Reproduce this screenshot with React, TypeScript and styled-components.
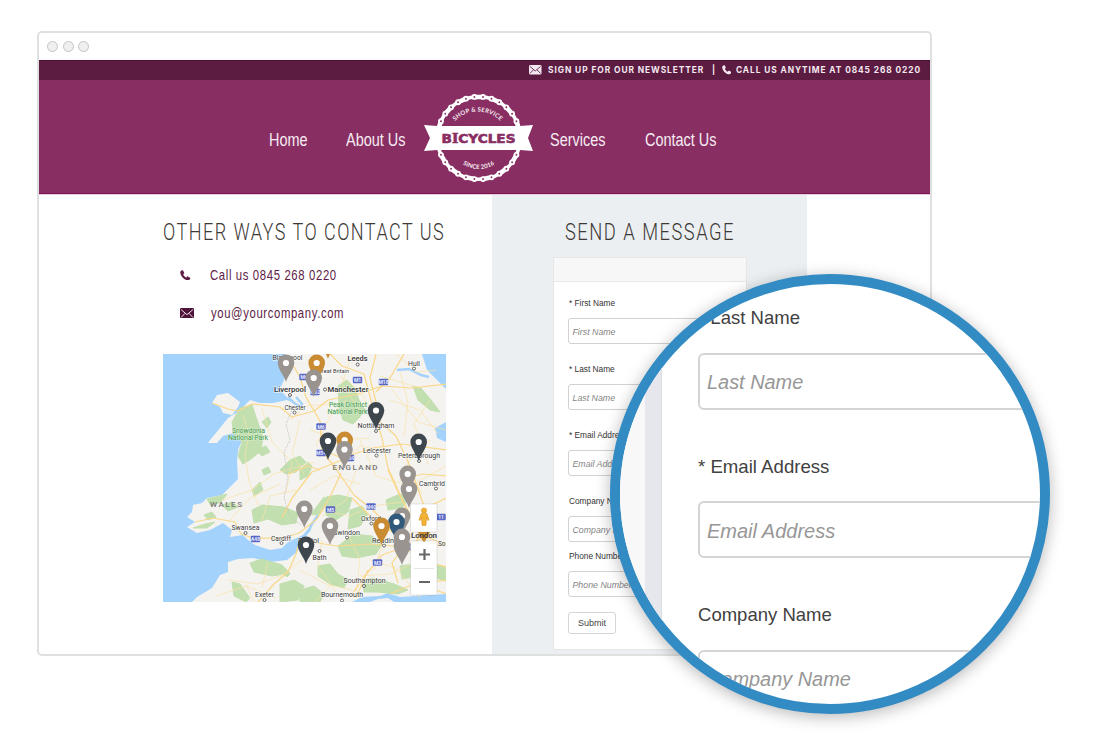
import React from "react";
import styled, { createGlobalStyle } from "styled-components";

const GlobalStyle = createGlobalStyle`
  * { box-sizing: border-box; }
  body { margin: 0; background: #fff; font-family: "Liberation Sans", Arial, sans-serif; }
`;

const Stage = styled.main`
  width: 1099px;
  height: 756px;
  padding: 31px 0 0 37px;
  position: relative;
  overflow: hidden;
  background: #fff;
`;

const Browser = styled.section`
  width: 895px;
  height: 625px;
  border: 2px solid #dfe0e0;
  border-radius: 5px;
  overflow: hidden;
  background: #fff;
  display: flex;
  flex-direction: column;
`;

const TitleBar = styled.div`
  flex: 0 0 27px;
  display: flex;
  align-items: center;
  gap: 4.6px;
  padding: 0 0 1px 8px;
`;

const Dot = styled.i`
  width: 11px;
  height: 11px;
  border-radius: 50%;
  border: 1px solid #c4c4c4;
  background: #efefef;
`;

const TopBar = styled.div`
  flex: 0 0 20px;
  display: flex;
  align-items: center;
  background: #5c1c42;
  border-top: 1px solid #4c1236;
  padding: 0 0 1px 490px;
  color: #f4e9f0;
`;

/* Text drawn narrower or wider than its font, in a box of a known width. */
const Fitted = styled.span<{ $w: number; $scale: number }>`
  flex: none;
  display: block;
  width: ${(p) => p.$w}px;
  white-space: nowrap;
  transform: scaleX(${(p) => p.$scale});
  transform-origin: left center;
`;

const TopText = styled(Fitted)`
  font: 700 9px/18px Inter, "Open Sans", sans-serif;
  letter-spacing: 1px;
`;

const Hero = styled.header`
  flex: 0 0 115px;
  display: flex;
  align-items: center;
  background: #892e63;
  border-bottom: 1px solid #eccbdc;
  box-shadow: inset 0 -1px 0 #7c1450;
  padding: 2px 0 0 230px;
`;

const NavItem = styled(Fitted)`
  font-size: 18px;
  line-height: 24px;
  color: #f6ecf2;
  padding-top: 4px;
`;

const Content = styled.div`
  flex: 1;
  display: flex;
  min-height: 0;
`;

const ContactColumn = styled.section`
  width: 453px;
  padding: 22px 0 0 124px;
  display: flex;
  flex-direction: column;
`;

const Heading = styled(Fitted).attrs({ as: "h2" })`
  margin: 0;
  font-family: Roboto, sans-serif;
  font-weight: 300;
  font-size: 24.5px;
  line-height: 30px;
  letter-spacing: 2px;
  color: #3d3935;
`;

const ContactRow = styled.div<{ $top: number }>`
  display: flex;
  align-items: center;
  height: 20px;
  margin-top: ${(p) => p.$top}px;
  padding-left: 17px;
  color: #5d1d46;
  font-size: 14.5px;
`;

const IconCell = styled.span<{ $w: number }>`
  flex: none;
  width: ${(p) => p.$w}px;
  display: flex;
  align-items: center;
`;

const ContactText = styled(Fitted)`
  letter-spacing: 0.8px;
`;

const MapFrame = styled.div`
  margin-top: 31px;
  height: 248px;
  width: 283px;
  svg { display: block; }
`;

const MessageColumn = styled.section`
  width: 315px;
  background: #ebeff2;
  padding: 22px 0 0 61px;
`;

const MessageTitle = styled.div`
  padding-left: 12px;
`;

const Card = styled.div`
  width: 194px;
  height: 393px;
  margin-top: 10px;
  background: #fff;
  border: 1px solid #e4e6e8;
  border-radius: 2px;
`;

const CardHead = styled.div`
  height: 24px;
  background: #f7f7f7;
  border-bottom: 1px solid #e8e8e8;
`;

const CardBody = styled.div`
  padding: 15px 14px 0;
`;

const Field = styled.label<{ $gap: number }>`
  display: block;
  margin-bottom: ${(p) => p.$gap}px;
`;

const LabelText = styled.span`
  display: block;
  padding-left: 1px;
  font-size: 8.3px;
  line-height: 12px;
  color: #333;
  white-space: pre;
`;

const InputBox = styled.span`
  display: flex;
  align-items: center;
  height: 26px;
  margin-top: 9px;
  padding: 1px 0 0 3.5px;
  border: 1px solid #d2d2d2;
  border-radius: 3px;
  font-size: 8.8px;
  font-style: italic;
  color: #858585;
  background: #fff;
`;

const SubmitButton = styled.button`
  display: block;
  width: 48px;
  height: 22px;
  padding: 0;
  border: 1px solid #d6d6d6;
  border-radius: 3px;
  background: #fff;
  font: 9px "Liberation Sans", Arial, sans-serif;
  color: #444;
`;

const Lens = styled.div`
  position: absolute;
  left: 610px;
  top: 274px;
  width: 440px;
  height: 440px;
  border: 10px solid #338bc4;
  border-radius: 50%;
  overflow: hidden;
  background: #fff;
  box-shadow: 0 3px 16px rgba(0, 0, 0, 0.28);
  display: flex;
`;

const LensPage = styled.div`
  flex: 0 0 25px;
  background: #f8f8f8;
`;

const LensGutter = styled.div`
  flex: 0 0 17px;
  background: #e5e7ec;
  border-right: 1px solid #dddee1;
`;

const LensForm = styled.div`
  flex: none;
  width: 378px;
  padding: 22px 0 0 36px;
`;

const LensField = styled.div`
  height: 148.5px;
`;

const LensLabel = styled(Fitted)`
  height: 24px;
  font-size: 19px;
  line-height: 24px;
  color: #414141;
`;

const LensInput = styled.div`
  margin-top: 22.5px;
  height: 57px;
  width: 460px;
  display: flex;
  align-items: center;
  padding: 3px 0 0 7px;
  border: 2px solid #d4d4d4;
  border-radius: 6px;
  font-size: 20px;
  font-style: italic;
  color: #979797;
`;

const Envelope = ({ width, color, line }: { width: number; color: string; line: string }) => (
  <svg width={width} height={(width * 10) / 13} viewBox="0 0 13 10">
    <rect width="13" height="10" rx="1.2" fill={color} />
    <path d="M1 1.5 6.5 6.2 12 1.5M1 8.8 4.6 5M12 8.8 8.4 5" fill="none" stroke={line} strokeWidth="0.9" />
  </svg>
);

const Phone = ({ size, color }: { size: number; color: string }) => (
  <svg width={size} height={size} viewBox="0 0 11 11">
    <path
      d="M2.3.2C.9.6 0 1.700.3 3.200c.6 3.600 3.800 7 7.300 7.500 1.500.2 2.700-.5 3.200-1.900.1-.3 0-.6-.3-.8L8.300 6.700c-.3-.2-.6-.1-.8.1l-.9 1C5.200 7.200 3.900 5.900 3.300 4.400l.9-.8c.3-.2.3-.5.2-.8L3.200.5C3 .2 2.700.1 2.300.2Z"
      fill={color}
    />
  </svg>
);

const rollers = Array.from({ length: 30 }, (_, i) => {
  const a = ((6 + i * 12) * Math.PI) / 180;
  return { x: 54.7 + 41.3 * Math.sin(a), y: 45 - 41.3 * Math.cos(a) };
});

const LogoSvg = styled.svg`
  flex: none;
  display: block;
  overflow: visible;
  margin-right: 17px;
`;

const Logo = () => (
  <LogoSvg width="109" height="90" viewBox="0 0 109 90">
    <circle cx="54.7" cy="45" r="41.3" fill="none" stroke="#fff" strokeWidth="3.600" />
    {rollers.map((r, i) => {
      const n = rollers[(i + 1) % 30];
      return i % 2 === 1 ? (
        <line key={i} x1={r.x} y1={r.y} x2={n.x} y2={n.y} stroke="#fff" strokeWidth="4.600" />
      ) : null;
    })}
    {rollers.map((r, i) => (
      <circle key={i} cx={r.x} cy={r.y} r="2.900" fill="#fff" />
    ))}
    {rollers.map((r, i) => (
      <circle key={i} cx={r.x} cy={r.y} r="0.950" fill="#892e63" />
    ))}
    <path d="M0 32 13 33H96l13-1-5 13 5 13-13-1H13L0 58l6-13Z" fill="#fff" />
    <path id="arcTop" d="M21.700 50.500a32 32 0 0 1 64 0" fill="none" />
    <path id="arcLow" d="M25.700 47a29 29 0 0 0 58 0" fill="none" />
    <g fontFamily="Lato, sans-serif" fontWeight="700" fontSize="6" fill="#f8eef4" textAnchor="middle">
      <text letterSpacing="0.200">
        <textPath href="#arcTop" startOffset="50%">SHOP &amp; SERVICE</textPath>
      </text>
      <text letterSpacing="0.100">
        <textPath href="#arcLow" startOffset="50%">SINCE 2016</textPath>
      </text>
    </g>
    <text x="17.500" y="49.700" textLength="74" lengthAdjust="spacingAndGlyphs" fontWeight="700" fontSize="12.500" fill="#892e63" stroke="#892e63" strokeWidth="0.600" fontFamily="DejaVu Sans, sans-serif">
      B<tspan fontFamily="DejaVu Serif, serif">I</tspan>CYCLES
    </text>
  </LogoSvg>
);

const GREY = "#999490";
const DARK = "#3e464e";
const ORANGE = "#c98c33";
const pins: [number, number, string][] = [
  [328, 359, ORANGE], [286, 382, GREY], [316.700, 382, ORANGE], [313.700, 397, GREY],
  [376, 429.500, DARK], [344.700, 459, ORANGE], [328, 460, DARK], [344.500, 468.500, GREY],
  [418.700, 461, DARK], [407.700, 493, GREY], [409, 508, GREY], [304.300, 528, GREY],
  [330, 545, GREY], [306, 564, DARK], [402, 535, GREY], [396.500, 541, "#30597c"],
  [381.500, 545, ORANGE], [402, 565, GREY], [402, 556, GREY],
];

const Pin = ({ x, y, color }: { x: number; y: number; color: string }) => (
  <g transform={`translate(${x} ${y})`}>
    <path d="M0 0C-1.500-6-8.300-13-8.300-19.200a8.300 8.300 0 0 1 16.600 0C8.300-13 1.500-6 0 0Z" fill={color} />
    <circle cy="-19" r="3.100" fill="#fff" />
  </g>
);

const greens = [
  "M240 408l12-3 4 12 7 20-2 14-10 8-8 5-5-8 4-14-8-8-2-12z",
  "M262 422l6-5 3 5-4 6zM256 450l10-4 4 6-8 4z",
  "M338 386l9-6 8 8 4 12 6 10-6 8-6 6-10-4-4-14z",
  "M413 386l8 2 10 12 9 12-10-2-12-10z",
  "M280 470l10-10 10-4 6 6-10 10-10 2zM252 490l8-8 3 8-9 6z",
  "M252 510l10-5 22 2 14 6-2 10-14 2-14-6-14 4zM222 505l10-3 6 5-10 4z",
  "M207 499l12-3 8-2-6 8-10 4zM193 528l12-4 10-2-8 6z",
  "M300 470l8-8 4 4-4 10-8 4zM310 515l8-10 6-8 4 5-8 12z",
  "M326 497l12-2 14 3-4 14-12 8-10-5z",
  "M350 510l12-4 6 8-8 12-12 3z",
  "M338 546l16-12 18 2 10 8-6 10-20 4-14-2z",
  "M250 563l12-4 20 6 8 8-18 3-18-4zM276 567l5-1 9 8-3 3z",
  "M318 566l12-2 8 10 10 6-4 8-14-4-12-8z",
  "M362 580l12-2 20 6 14 6-10 4-20-2-14 0z",
  "M400 566l20-3 26 4v14l-20-6-24 4z",
  "M280 584l14-4 10 6-6 14-18 2zM232 582l8 2 10 14-4 4-12-6z",
  "M300 590l14-4 10 8-4 8h-20z",
  "M386 500l14-6 10 4-8 10-14 2z",
  "M204 515l8-3 4 5-8 3zM262 470l6-3 3 5-7 3z",
];

const majorRoads = [
  "M212 403l16 6 10 2 14-7 28 3 12 10 22-6 14-11 30-6 24-8 30 2 34-4",
  "M288 357l12 20 6 20 14 24 2 30 14 18 18 26 20 16 24 26",
  "M330 354l12 12 22 8 8 30 10 34 6 30 18 40",
  "M376 354l-6 24 6 24M404 354l-14 24-14 14M378 420l18 16 14 30 14 40",
  "M322 450l20 8 30-10 30-4 44 6M342 460l-30 12-20 26-10 20",
  "M195 522l18-4 22 4 6 12 12 4 30 0 16-5 18-14 14-24 10-22",
  "M300 540l36 6 34-2 34 3 20-10M300 540l-4 14-8 18-14 12-16 18",
  "M368 570l-12 28M404 547l-22 8-18 22-14 20M404 547l20 14 22 6M424 506l-8 40 10 40 20 8",
  "M352 498l20 20 26 18M400 480l22-6 24 2M388 470l12 26 22 40 24 8M390 594l24-10 32-4",
  "M446 498l-24 12-10 24M320 470l-12-4-20 8M446 545l-22 0-22 4-10 14 6 20",
];

const minorRoads = [
  "M243 415l6 20-4 20 4 26 10 26M262 408l10 34 20 20-6 30M300 420l-8 34 12 20",
  "M222 500l30-10 22-16 40-12M230 520l20-22 30-14M262 520l8-24 26-6",
  "M340 376l20 16 14 22M390 400l30 10 18 24M400 372l8 30-4 34M346 400l-16 16-14 30",
  "M360 440l16 36 34 10 36-20M356 470l-10 30-24 16M430 400l-16 24 14 40",
  "M320 510l30 6 22-10 30-4M322 540l-4 26 18 26M346 530l14 30-4 34M390 520l-16 50",
  "M228 580l30 4 22-8 22-16M216 596l30-10 30 12M300 570l26 14 26 6M420 560l-30 14-30 2",
  "M336 470l24-24 28 6M310 490l24-14 26 8M430 440l-24 24 16 30M290 420l16-14 24-2",
  "M352 354l-10 30 20 30M380 376l40 12M310 430l30 10 30-2M246 584l8 18M268 562l-6 26",
  "M396 354l20 18 20-2M392 390l26 32 28 8M370 560l26 8 24 30M330 586l-16 16",
];

const towns: [string, number, number, number, number, number?][] = [
  ["Blackpool", 272.500, 360, 30, 7.500], ["Leeds", 347.500, 361, 20, 8, 1], ["Hull", 408, 366, 12, 7.500],
  ["Great Britain", 318, 373, 31, 5.800], ["Liverpool", 274, 392, 32, 8, 1], ["Manchester", 327.500, 392, 41, 8, 1],
  ["Chester", 284.500, 410, 21, 6.500], ["Nottingham", 357.500, 428, 37, 7.500], ["Leicester", 363, 453, 28, 7.500],
  ["Peterborough", 398, 458, 42, 7.500], ["Cambrid", 419, 486, 26, 7.500], ["Swansea", 231.500, 530, 28, 7.500],
  ["Cardiff", 271, 541, 20, 7.500], ["Bristol", 298, 543, 21, 7.500], ["Bath", 312.500, 560, 14, 7.500], ["Swindon", 333, 535, 27, 7.500],
  ["Oxford", 361, 521, 20, 7.500], ["Reading", 372, 543, 26, 7.500],
  ["Southampton", 343.500, 583, 42, 7.500], ["Bournemouth", 321, 597, 42, 7.500], ["Exeter", 255, 597, 19, 7.500],
  ["So", 438, 546, 7.500, 7.500],
];

const townDots = [[287, 362], [357.700, 364.500], [414, 368.500], [290, 395], [325, 389.500], [294.500, 412.500], [376, 431], [376.500, 455.500], [419, 461], [436, 488.500], [245.500, 533], [281.500, 543], [319.500, 551], [347, 537.500], [371.500, 523.500], [384, 545.500], [364, 586], [342, 600.500], [264.500, 600]];

const shields: [number, number, string][] = [
  [304, 377, "M6"], [357.500, 380, "M1"], [383.500, 382, "M18"], [315, 392, "M62"], [321, 426.500, "M6"],
  [321, 453, "M54"], [349.500, 458, "M69"], [330.500, 509.500, "M5"], [371, 506.500, "M40"], [441, 517, "11"],
  [255.500, 539, "A48"], [377.500, 562.500, "M3"], [409, 547, "M4"],
];

const MapPicture = () => (
  <svg width="283" height="248" viewBox="163 354 283 248" fontFamily="Roboto, sans-serif">
    <rect x="163" y="354" width="283" height="248" fill="#a3d2fc" />
    <path
      d="M285 354 284 366 287 374 283 382 280 389 284 394 291 402 287 400 273 403 260 403 250 400 243 407 238 412 228 418 220 428 210 440 208 443 217 443 223 436 237 432 242 440 238 450 237 462 238 479 232 485 222 495 207 498 202 503 193 505 192 512 187 517 195 522 187 527 197 533 210 530 223 523 232 530 230 537 243 535 248 540 255 545 270 550 282 548 288 542 303 535 312 524 311 530 304 539 297 552 287 560 270 562 253 558 238 559 228 562 228 572 220 575 212 588 197 597 192 602H352L362 597 380 596 388 593 400 597 446 594V442L437 438 435 428 446 422V389L437 380 427 370 422 354Z"
      fill="#f4f3f0"
    />
    <path d="M212 403 217 395 228 393 240 402 238 407 232 415 223 413 220 407Z" fill="#f4f3f0" />
    <path d="M288 397l6 6 7 4 1-3-6-7M397 370l12-1 12 6 8 2M318 515l-8 12" fill="none" stroke="#a3d2fc" strokeWidth="2.500" />
    <path d="M370 602l8-3 10-1 6 4z" fill="#f4f3f0" />
    {greens.map((d) => <path key={d} d={d} fill="#c2dfb0" strokeLinejoin="round" stroke="#c2dfb0" />)}
    <g fill="none" strokeLinejoin="round">
      {minorRoads.map((d) => <path key={d} d={d} stroke="#fae3a6" strokeWidth="0.700" />)}
      {majorRoads.map((d) => <path key={d} d={d} stroke="#fad88a" strokeWidth="1.250" />)}
      <path d="M292 410l-6 14 4 16-6 12 4 26-4 20 6 18 12 10" stroke="#c9c5c0" strokeWidth="0.800" strokeDasharray="2 1" />
    </g>
    {shields.map(([x, y, t]) => (
      <g key={`${t}${x}`}>
        <rect x={x - 4.700} y={y - 3.300} width={9.400} height="6.600" rx="1" fill="#5868c4" />
        <text x={x} y={y + 2} fontSize="5" fontWeight="700" textAnchor="middle" fill="#e9ebff">{t}</text>
      </g>
    ))}
    {townDots.map(([x, y]) => <circle key={`${x}-${y}`} cx={x} cy={y} r="1.500" fill="#fff" stroke="#555" strokeWidth="0.900" />)}
    {towns.map(([t, x, y, w, s, bold]) => (
      <text key={t} x={x} y={y} fontSize={s} textLength={w} lengthAdjust="spacingAndGlyphs" fontWeight={bold ? 600 : 400} fill="#3a3a3a" stroke="#fff" strokeWidth="1.300" strokeOpacity="0.700" paintOrder="stroke">{t}</text>
    ))}
    <g fontSize="7" fill="#3f9a4d" stroke="#e9f3e0" strokeWidth="1" strokeOpacity="0.700" paintOrder="stroke">
      <text x="232" y="432.500" textLength="33">Snowdonia</text>
      <text x="228" y="439.500" textLength="40">National Park</text>
      <text x="329" y="407" textLength="38">Peak District</text>
      <text x="327.500" y="414" textLength="40">National Park</text>
    </g>
    <g fontSize="8" fontWeight="500" fill="#777">
      <text x="210" y="506.500" textLength="32">WALES</text>
      <text x="332.500" y="470" textLength="45">ENGLAND</text>
    </g>
    {pins.map(([x, y, c]) => <Pin key={`${x}-${y}`} x={x} y={y} color={c} />)}
    <g fill="#fff" stroke="#000" strokeOpacity="0.100" strokeWidth="1">
      <rect x="410.500" y="504" width="26.500" height="28" rx="1" />
      <rect x="410.500" y="541" width="26.500" height="54" rx="1" />
    </g>
    <path d="M418 532h12l-5 9.500h-2z" fill={ORANGE} />
    <text x="411" y="538" fontSize="8" fontWeight="600" textLength="26" fill="#3a3a3a">London</text>
    <g fill="#f3b234" stroke="#cf8a1c" strokeWidth="0.500">
      <circle cx="424" cy="510.500" r="2.600" />
      <path d="M421 513.500h6l2 6.500-1.300.4-1.200-3-.5 8h-4l-.5-8-1.200 3-1.300-.4z" />
    </g>
    <path d="M414 568.500h20" stroke="#e6e6e6" strokeWidth="1" />
    <path d="M419 554.500h11M424.500 549v11M419 582h11" stroke="#666" strokeWidth="2.200" />
  </svg>
);

const fields: [string, string, number][] = [
  ["* First Name", "First Name", 19],
  ["* Last Name", "Last Name", 19],
  ["* Email Address", "Email Address", 19],
  ["Company Name", "Company Name", 8],
  ["Phone Number", "Phone Number", 15],
];

const lensFields: [string, string, number, number][] = [
  ["* Last Name", "Last Name", 0.975, 0.995],
  ["* Email Address", "Email Address", 0.98, 1],
  ["Company Name", "Company Name", 0.975, 0.995],
];

export default function App() {
  return (
    <>
      <GlobalStyle />
      <Stage>
        <Browser>
          <TitleBar><Dot /><Dot /><Dot /></TitleBar>
          <TopBar>
            <IconCell $w={19}><Envelope width={12.500} color="#f4e9f0" line="#5c1c42" /></IconCell>
            <TopText $w={163.500} $scale={0.93}>SIGN UP FOR OUR NEWSLETTER</TopText>
            <TopText $w={10} $scale={0.93}>|</TopText>
            <IconCell $w={14}><Phone size={9.500} color="#f4e9f0" /></IconCell>
            <TopText $w={186} $scale={0.926}>CALL US ANYTIME AT 0845 268 0220</TopText>
          </TopBar>
          <Hero>
            <NavItem $w={77} $scale={0.803}>Home</NavItem>
            <NavItem $w={78} $scale={0.803}>About Us</NavItem>
            <Logo />
            <NavItem $w={95} $scale={0.803}>Services</NavItem>
            <NavItem $w={80} $scale={0.803}>Contact Us</NavItem>
          </Hero>
          <Content>
            <ContactColumn>
              <Heading $w={300} $scale={0.736}>OTHER WAYS TO CONTACT US</Heading>
              <ContactRow $top={18}>
                <IconCell $w={30}><Phone size={10.500} color="#5d1d46" /></IconCell>
                <ContactText $w={130} $scale={0.783}>Call us 0845 268 0220</ContactText>
              </ContactRow>
              <ContactRow $top={18}>
                <IconCell $w={30.500}><Envelope width={14} color="#4f1238" line="#efe3ea" /></IconCell>
                <ContactText $w={130} $scale={0.78}>you@yourcompany.com</ContactText>
              </ContactRow>
              <MapFrame><MapPicture /></MapFrame>
            </ContactColumn>
            <MessageColumn>
              <MessageTitle>
                <Heading $w={200} $scale={0.748}>SEND A MESSAGE</Heading>
              </MessageTitle>
              <Card>
                <CardHead />
                <CardBody>
                  {fields.map(([label, hint, gap]) => (
                    <Field key={label} $gap={gap}>
                      <LabelText>{label}</LabelText>
                      <InputBox>{hint}</InputBox>
                    </Field>
                  ))}
                  <SubmitButton>Submit</SubmitButton>
                </CardBody>
              </Card>
            </MessageColumn>
          </Content>
        </Browser>
        <Lens>
          <LensPage />
          <LensGutter />
          <LensForm>
            {lensFields.map(([label, hint, a, b]) => (
              <LensField key={label}>
                <LensLabel $w={200} $scale={a}>{label}</LensLabel>
                <LensInput><Fitted $w={200} $scale={b}>{hint}</Fitted></LensInput>
              </LensField>
            ))}
          </LensForm>
        </Lens>
      </Stage>
    </>
  );
}
